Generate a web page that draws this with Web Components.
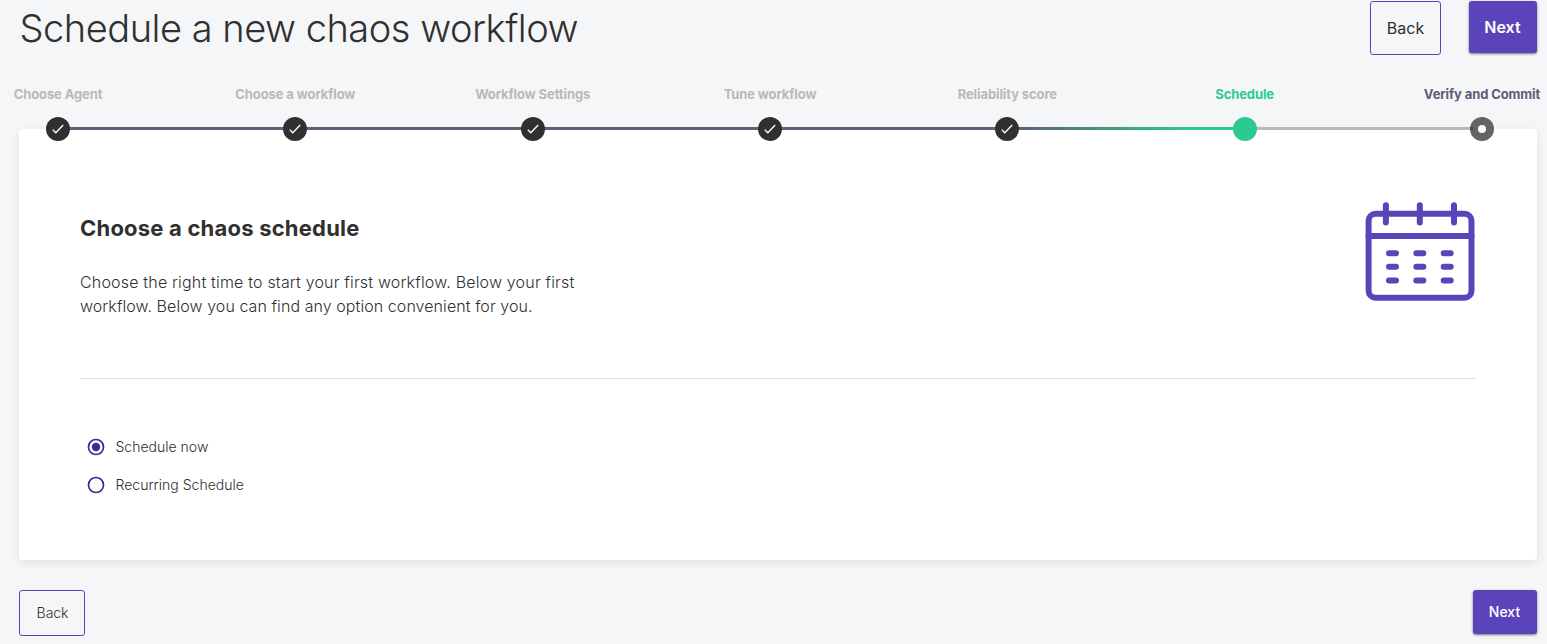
<!DOCTYPE html>
<html lang="en">
<head>
<meta charset="utf-8">
<title>Schedule a new chaos workflow</title>
<style>
html,body{margin:0;height:100%;overflow:hidden;background:#f5f6f8}
body{font-family:Inter,"Liberation Sans",sans-serif;color:#303030}
</style>
</head>
<body>
<schedule-page></schedule-page>
<script>
const define = (name, html, setup) => customElements.define(name, class extends HTMLElement {
  constructor() {
    super();
    this.attachShadow({ mode: 'open' }).innerHTML = html;
  }
  connectedCallback() { if (setup) setup(this, this.shadowRoot); }
});

define('action-button', `<style>
:host{display:flex;align-items:center;justify-content:center;box-sizing:border-box;border-radius:3px;
 width:66px;height:46px;padding:0 0 2px 1px;border:1px solid #5b44ba;font-size:14px;font-weight:300;letter-spacing:-.05px}
:host([filled]){width:64px;height:44px;padding:0 1px 2px 0;border:0;background:#5b44ba;color:#fff;font-weight:500;letter-spacing:0;
 box-shadow:0 1px 3px rgba(0,0,0,.32),0 1px 2px rgba(0,0,0,.25)}
:host([large]){width:71px;height:54px;padding:0;font-size:16px;font-weight:400;letter-spacing:.05px}
:host([large][filled]){width:68px;height:52px;padding:0 1px 0 0;font-weight:600;letter-spacing:.05px}
</style><slot></slot>`);

define('page-header', `<style>
:host{display:flex;justify-content:space-between;align-items:flex-start;height:55px;padding:1px 10px 0 19.5px;box-sizing:border-box}
h1{margin:4px 0 0;font-size:38px;line-height:46px;font-weight:300;letter-spacing:-.48px;white-space:nowrap}
div{display:flex;gap:28px;align-items:flex-start}
</style><h1><slot></slot></h1><div><slot name="actions"></slot></div>`);

define('work-step', `<style>
:host{display:grid;grid-template-columns:24px 1fr;grid-template-rows:20px 24px;row-gap:13px;flex:1;align-items:center;
 --label:#b9b9b9;--line:#5f607a}
:host([state=active]){--label:#2dca8f;--line:#b9b9b9}
:host([state=todo]){flex:0 0 24px;--label:#5d5b78}
:host([blend]){--line:linear-gradient(90deg,#5d607a,#2dca8f 80%)}
.label{grid-area:1/1;justify-self:center;white-space:nowrap;font-size:13px;line-height:20px;font-weight:700;letter-spacing:-.11px;color:var(--label)}
svg{grid-area:2/1;display:block;z-index:1}
i{grid-area:2/2;height:3px;background:var(--line);margin:0 -2px 0 -2px;position:relative;top:-.5px}
:host([state=todo]) i{display:none}
</style><span class="label"><slot></slot></span><i></i><svg width="24" height="24" viewBox="0 0 24 24"></svg>`,
(el, root) => {
  const icons = {
    done: '<circle cx="12" cy="12" r="12" fill="#303030"/><path d="M6.8 12.8l3 3 7.4-7.8" fill="none" stroke="#fff" stroke-width="1.3"/>',
    active: '<circle cx="12" cy="12" r="12" fill="#2dca8f"/>',
    todo: '<circle cx="12" cy="12" r="12" fill="#646464"/><path d="M.3 10h2.7v3H.1z" fill="#4a4a4a"/><circle cx="12" cy="12" r="4" fill="#fff"/>'
  };
  root.querySelector('svg').innerHTML = icons[el.getAttribute('state')];
});

define('work-stepper', `<style>
:host{display:flex;margin:29px 53px -12px 46px;position:relative;z-index:1}
</style><slot></slot>`);

define('radio-option', `<style>
:host{display:flex;align-items:center;height:38px;gap:11px;font-size:14px;font-weight:300;letter-spacing:.01px}
span{padding-bottom:1px;margin-left:-.5px}
</style><svg width="18" height="18" viewBox="0 0 18 18"><circle cx="9" cy="9" r="7.5" fill="none" stroke="#3b2a9d" stroke-width="1.7"/><circle class="dot" cx="9" cy="9" r="4.2" fill="#3b2a9d"/></svg><span><slot></slot></span>`,
(el, root) => { if (!el.hasAttribute('checked')) root.querySelector('.dot').remove(); });

define('calendar-icon', `<style>:host{display:block}svg{display:block}</style>
<svg width="110" height="100" viewBox="0 0 110 100" fill="none" stroke="#5b44ba" stroke-width="6" stroke-linecap="round">
<rect x="3.6" y="12.8" width="102.9" height="84" rx="7"/><path d="M3.6 35h102.9" />
<path d="M20.9 4.2v17.4M54.8 4.2v17.4M89 4.2v17.4M24 52.2h7M51.3 52.2h7M78.7 52.2h7M24 65.8h7M51.3 65.8h7M78.7 65.8h7M24 79.4h7M51.3 79.4h7M78.7 79.4h7"/></svg>`);

define('schedule-card', `<style>
:host{display:block;box-sizing:border-box;height:431px;margin:0 10px 0 19px;padding:72px 61px 0;background:#fff;border-radius:4px;
 box-shadow:0 3px 10px rgba(0,0,0,.09)}
.intro{display:flex;justify-content:space-between;height:177px;border-bottom:1px solid #e0e0e0}
h2{margin:13px 0 0;font-size:22px;line-height:28px;font-weight:700;letter-spacing:.21px}
p{margin:28px 0 0;width:520px;font-size:16px;line-height:24px;font-weight:300;letter-spacing:.18px}
.options{display:flex;flex-direction:column;padding:49px 0 0 7px}
calendar-icon{margin-right:1px}
</style><div class="intro"><div><h2><slot name="title"></slot></h2><p><slot name="text"></slot></p></div><calendar-icon></calendar-icon></div>
<div class="options"><slot></slot></div>`);

define('page-footer', `<style>:host{display:flex;justify-content:space-between;align-items:flex-start;margin:30px 10px 0 19px}</style><slot></slot>`);

define('schedule-page', `<style>:host{display:block;height:644px;overflow:hidden}.second{letter-spacing:.07px}</style>
<page-header>Schedule a new chaos workflow<action-button slot="actions" large>Back</action-button><action-button slot="actions" large filled>Next</action-button></page-header>
<work-stepper>
<work-step state="done">Choose Agent</work-step>
<work-step state="done">Choose a workflow</work-step>
<work-step state="done">Workflow Settings</work-step>
<work-step state="done">Tune workflow</work-step>
<work-step state="done" blend>Reliability score</work-step>
<work-step state="active">Schedule</work-step>
<work-step state="todo">Verify and Commit</work-step>
</work-stepper>
<schedule-card><span slot="title">Choose a chaos schedule</span>
<span slot="text">Choose the right time to start your first workflow. Below your first<br><span class="second">workflow. Below you can find any option convenient for you.</span></span>
<radio-option checked>Schedule now</radio-option><radio-option>Recurring Schedule</radio-option></schedule-card>
<page-footer><action-button>Back</action-button><action-button filled>Next</action-button></page-footer>
`);
</script>
</body>
</html>
